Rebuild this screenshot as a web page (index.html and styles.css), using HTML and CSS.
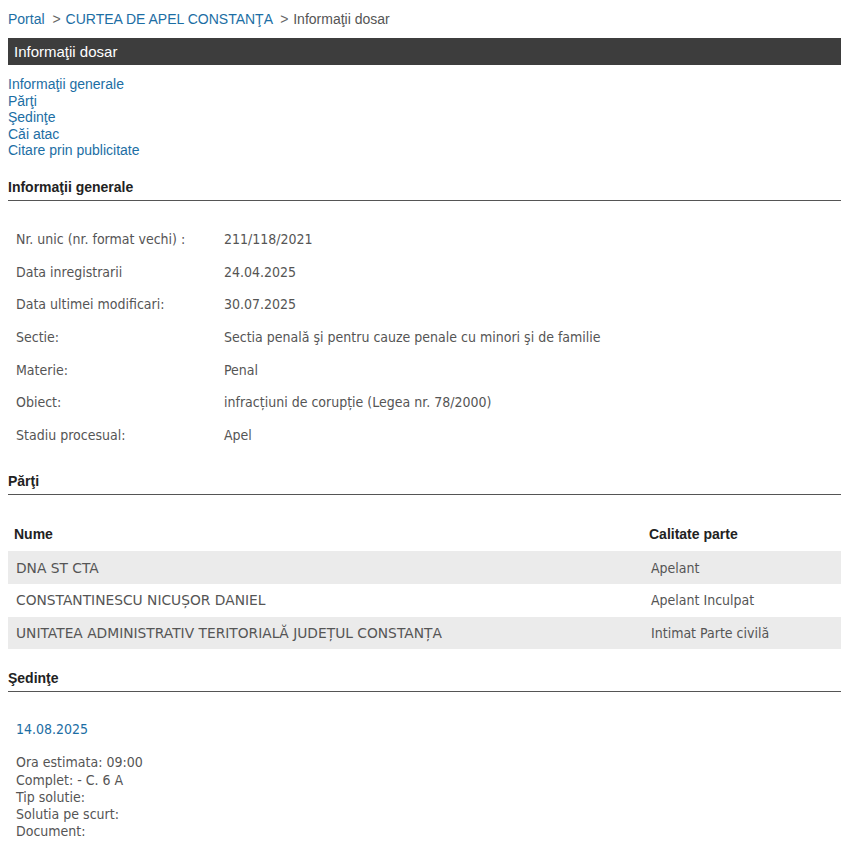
FILE: index.html
```html
<!DOCTYPE html>
<html lang="ro">
<head>
    <meta charset="UTF-8">
    <meta name="viewport" content="width=device-width, initial-scale=1.0">
    <title>Informaţii dosar</title>
    <link rel="stylesheet" href="styles.css">
</head>
<body>
    <div class="page">
        <div class="breadcrumb">
            <a href="#">Portal</a>
            <span class="sep">&gt;</span>
            <a href="#">CURTEA DE APEL CONSTANŢA</a>
            <span class="sep">&gt;</span>
            <span class="current">Informaţii dosar</span>
        </div>

        <div class="titlebar">Informaţii dosar</div>

        <ul class="toc">
            <li><a href="#generale">Informaţii generale</a></li>
            <li><a href="#parti">Părţi</a></li>
            <li><a href="#sedinte">Şedinţe</a></li>
            <li><a href="#cai">Căi atac</a></li>
            <li><a href="#citare">Citare prin publicitate</a></li>
        </ul>

        <h3 class="section" id="generale">Informaţii generale</h3>
        <table class="info">
            <tr><td class="label">Nr. unic (nr. format vechi) :</td><td>211/118/2021</td></tr>
            <tr><td class="label">Data inregistrarii</td><td>24.04.2025</td></tr>
            <tr><td class="label">Data ultimei modificari:</td><td>30.07.2025</td></tr>
            <tr><td class="label">Sectie:</td><td>Sectia penală şi pentru cauze penale cu minori şi de familie</td></tr>
            <tr><td class="label">Materie:</td><td>Penal</td></tr>
            <tr><td class="label">Obiect:</td><td>infracțiuni de corupție (Legea nr. 78/2000)</td></tr>
            <tr><td class="label">Stadiu procesual:</td><td>Apel</td></tr>
        </table>

        <h3 class="section" id="parti">Părţi</h3>
        <table class="parti">
            <thead>
                <tr><th>Nume</th><th class="col-calitate">Calitate parte</th></tr>
            </thead>
            <tbody>
                <tr><td class="nume">DNA ST CTA</td><td>Apelant</td></tr>
                <tr><td class="nume">CONSTANTINESCU NICUȘOR DANIEL</td><td>Apelant Inculpat</td></tr>
                <tr><td class="nume">UNITATEA ADMINISTRATIV TERITORIALĂ JUDEȚUL CONSTANȚA</td><td>Intimat Parte civilă</td></tr>
            </tbody>
        </table>

        <h3 class="section" id="sedinte">Şedinţe</h3>
        <div class="sedinta">
            <div class="sedinta-data">14.08.2025</div>
            <div class="sedinta-detalii">
                Ora estimata: 09:00<br>
                Complet: - C. 6 A<br>
                Tip solutie:<br>
                Solutia pe scurt:<br>
                Document:
            </div>
        </div>
    </div>
</body>
</html>
```

FILE: styles.css
```css
body {
    font-family: "Liberation Sans", Arial, sans-serif;
    font-size: 14px;
    margin: 8px;
    background-color: #fff;
    color: #555;
}
a {
    color: #1c6ea4;
    text-decoration: none;
}
.page {
    width: 833px;
}
.breadcrumb {
    padding-top: 3px;
    height: 27px;
    line-height: 17px;
    font-size: 14px;
}
.breadcrumb .sep {
    color: #666;
    margin: 0 1px 0 4px;
}
.breadcrumb .current {
    color: #555;
}
.titlebar {
    background-color: #3d3d3d;
    color: #fff;
    font-size: 15px;
    height: 27px;
    line-height: 27px;
    padding-left: 6px;
}
.toc {
    list-style: none;
    margin: 11px 0 0 0;
    padding: 0;
}
.toc li {
    line-height: 16.5px;
    font-size: 14px;
}
.section {
    margin: 0;
    font-size: 14px;
    font-weight: bold;
    color: #222;
    padding-bottom: 5px;
    border-bottom: 1px solid #555;
}
#generale {
    margin-top: 20px;
}
.info {
    font-family: "DejaVu Sans Condensed", "DejaVu Sans", sans-serif;
    font-size: 14px;
    border-collapse: collapse;
    margin: 22px 0 22px 0;
}
.info td {
    height: 32.7px;
    padding: 0 8px;
    vertical-align: middle;
}
.info .label {
    width: 192px;
}
.parti {
    width: 100%;
    border-collapse: collapse;
    margin: 22px 0 21px 0;
    font-family: "DejaVu Sans Condensed", "DejaVu Sans", sans-serif;
    font-size: 14px;
}
.parti th {
    font-family: "Liberation Sans", Arial, sans-serif;
    font-weight: bold;
    color: #222;
    text-align: left;
    padding: 0 6px;
    height: 34px;
}
.parti td {
    padding: 0 8px;
    height: 32.7px;
}
.parti td.nume {
    font-family: "DejaVu Sans", sans-serif;
    font-size: 13.8px;
}
.parti tbody tr:nth-child(odd) {
    background-color: #ebebeb;
}
.parti .col-calitate {
    width: 186px;
}
.sedinta {
    padding: 29px 8px 0 8px;
    font-family: "DejaVu Sans Condensed", "DejaVu Sans", sans-serif;
}
.sedinta-data {
    color: #1c6ea4;
    font-size: 14px;
    margin-bottom: 17px;
}
.sedinta-detalii {
    font-size: 14px;
    line-height: 17.25px;
}
```
